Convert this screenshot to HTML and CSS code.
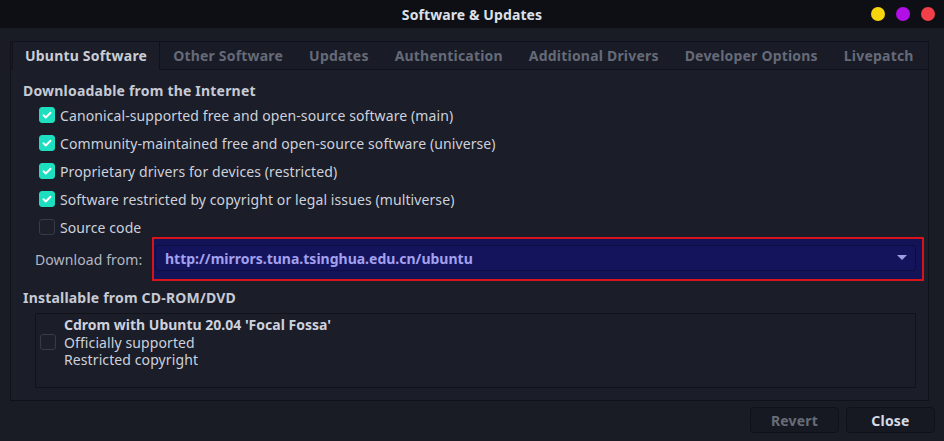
FILE: index.html
```html
<!DOCTYPE html>
<html>
<head>
<meta charset="utf-8">
<link rel="stylesheet" href="styles.css">
</head>
<body>
<div class="titlebar">
  <div></div>
  <div class="title">Software &amp; Updates</div>
  <div class="controls">
    <span class="dot dot-min"></span>
    <span class="dot dot-max"></span>
    <span class="dot dot-close"></span>
  </div>
</div>
<div class="main">
  <div class="notebook">
    <div class="tabs">
      <div class="tab active">Ubuntu Software</div>
      <div class="tab">Other Software</div>
      <div class="tab">Updates</div>
      <div class="tab">Authentication</div>
      <div class="tab">Additional Drivers</div>
      <div class="tab">Developer Options</div>
      <div class="tab">Livepatch</div>
      <div class="tab-fill"></div>
    </div>
    <div class="page">
      <div class="heading">Downloadable from the Internet</div>
      <div class="checks">
        <label class="row"><span class="cb on"><svg viewBox="0 0 16 16"><path d="M4 8.2l2.6 2.6L12 5.4" fill="none" stroke="#fff" stroke-width="2.2" stroke-linecap="round" stroke-linejoin="round"/></svg></span>Canonical-supported free and open-source software (main)</label>
        <label class="row"><span class="cb on"><svg viewBox="0 0 16 16"><path d="M4 8.2l2.6 2.6L12 5.4" fill="none" stroke="#fff" stroke-width="2.2" stroke-linecap="round" stroke-linejoin="round"/></svg></span>Community-maintained free and open-source software (universe)</label>
        <label class="row"><span class="cb on"><svg viewBox="0 0 16 16"><path d="M4 8.2l2.6 2.6L12 5.4" fill="none" stroke="#fff" stroke-width="2.2" stroke-linecap="round" stroke-linejoin="round"/></svg></span>Proprietary drivers for devices (restricted)</label>
        <label class="row"><span class="cb on"><svg viewBox="0 0 16 16"><path d="M4 8.2l2.6 2.6L12 5.4" fill="none" stroke="#fff" stroke-width="2.2" stroke-linecap="round" stroke-linejoin="round"/></svg></span>Software restricted by copyright or legal issues (multiverse)</label>
        <label class="row"><span class="cb"></span>Source code</label>
      </div>
      <div class="download">
        <span class="dl-label">Download from:</span>
        <div class="highlight">
          <div class="combo">
            <span class="url">http://mirrors.tuna.tsinghua.edu.cn/ubuntu</span>
            <svg class="arrow" viewBox="0 0 10 6"><path d="M0 0h10L5 5z" fill="#a09ce0"/></svg>
          </div>
        </div>
      </div>
      <div class="heading heading2">Installable from CD-ROM/DVD</div>
      <div class="cdframe">
        <div class="cdrow">
          <span class="cb"></span>
          <div class="cdtext">
            <div class="cdtitle">Cdrom with Ubuntu 20.04 'Focal Fossa'</div>
            <div>Officially supported</div>
            <div>Restricted copyright</div>
          </div>
        </div>
      </div>
    </div>
  </div>
  <div class="buttons">
    <button class="btn btn-disabled">Revert</button>
    <button class="btn">Close</button>
  </div>
</div>
</body>
</html>
```
FILE: styles.css
```css
* { box-sizing: border-box; }
html, body {
  margin: 0;
  padding: 0;
  width: 944px;
  height: 441px;
  overflow: hidden;
}
body {
  background: #191b25;
  font-family: "Noto Sans", "Open Sans", sans-serif;
  font-size: 14px;
  letter-spacing: 0.1px;
  color: #cdd1dc;
}
.titlebar {
  height: 28px;
  background: #0e0f14;
  display: grid;
  grid-template-columns: 1fr auto 1fr;
  align-items: center;
}
.title {
  font-weight: bold;
  color: #dde0e8;
  font-size: 14px;
  letter-spacing: 0.1px;
}
.controls {
  display: flex;
  justify-content: flex-end;
  gap: 11px;
  padding-right: 9px;
}
.dot {
  width: 14px;
  height: 14px;
  border-radius: 50%;
}
.dot-min { background: #f7d50e; }
.dot-max { background: #b20fe6; }
.dot-close { background: #f2404a; }

.main {
  padding: 13px 15px 0 10px;
}
.notebook {
  border: 1px solid #10111a;
  background: #1b1d28;
  height: 360px;
  display: flex;
  flex-direction: column;
}
.tabs {
  display: flex;
  height: 28px;
  background: #191b26;
  padding-left: 1px;
}
.tab {
  padding: 0 13px;
  line-height: 27px;
  font-weight: bold;
  letter-spacing: 0.2px;
  color: #656a78;
  border-bottom: 1px solid #10111a;
  white-space: nowrap;
}
.tab.active {
  color: #c9cdd7;
  background: #1b1d28;
  border-left: 1px solid #10111a;
  border-right: 1px solid #10111a;
  border-bottom-color: transparent;
  padding: 0 12px;
}
.tab-fill {
  flex: 1;
  border-bottom: 1px solid #10111a;
}
.page {
  padding: 11px 12px 12px 12px;
  display: flex;
  flex-direction: column;
  flex: 1;
}
.heading {
  font-weight: bold;
  line-height: 20px;
  letter-spacing: 0.2px;
  color: #c6cad4;
}
.checks {
  display: flex;
  flex-direction: column;
  gap: 2px;
  padding-left: 16px;
  margin-top: 1px;
}
.row {
  display: flex;
  align-items: center;
  gap: 5px;
  height: 26px;
  color: #cdd1dc;
}
.cb {
  width: 16px;
  height: 16px;
  border-radius: 3px;
  border: 1px solid #383b47;
  background: #1d1f2a;
  flex: none;
  display: block;
}
.cb.on {
  background: #1ddfc0;
  border-color: #1ddfc0;
}
.cb svg {
  width: 14px;
  height: 14px;
  display: block;
}
.download {
  display: flex;
  align-items: center;
  margin-top: -3px;
  margin-right: -8px;
}
.dl-label {
  padding-left: 12px;
  width: 129px;
  color: #b3b8c4;
  flex: none;
}
.highlight {
  flex: 1;
  border: 2px solid #d7141b;
  background: #131357;
  padding: 6px 6px 8px 1px;
}
.combo {
  height: 26px;
  background: #14145c;
  border: 1px solid #0d0d45;
  border-radius: 3px;
  display: flex;
  align-items: center;
  justify-content: space-between;
  padding: 0 8px 0 9px;
}
.url {
  font-weight: bold;
  letter-spacing: 0;
  color: #a3a0f0;
}
.arrow {
  width: 10px;
  height: 6px;
  display: block;
}
.heading2 {
  margin-top: 7px;
}
.cdframe {
  margin: 5px 0 0 12px;
  border: 1px solid #11131a;
  height: 75px;
  padding: 2px 4px 0 4px;
}
.cdrow {
  display: flex;
  align-items: center;
  gap: 8px;
}
.cdtext {
  line-height: 17.5px;
  color: #cdd1dc;
}
.cdtitle {
  font-weight: bold;
  letter-spacing: 0;
}
.buttons {
  display: flex;
  justify-content: flex-end;
  gap: 7px;
  padding-top: 6px;
  margin-right: -6px;
}
.btn {
  width: 89px;
  height: 26px;
  font-family: inherit;
  font-size: 14px;
  font-weight: bold;
  letter-spacing: 0.2px;
  color: #d6dae3;
  background: #171922;
  border: 1px solid #0f1118;
  border-radius: 4px;
  padding: 0;
}
.btn-disabled {
  color: #686c77;
}
```
